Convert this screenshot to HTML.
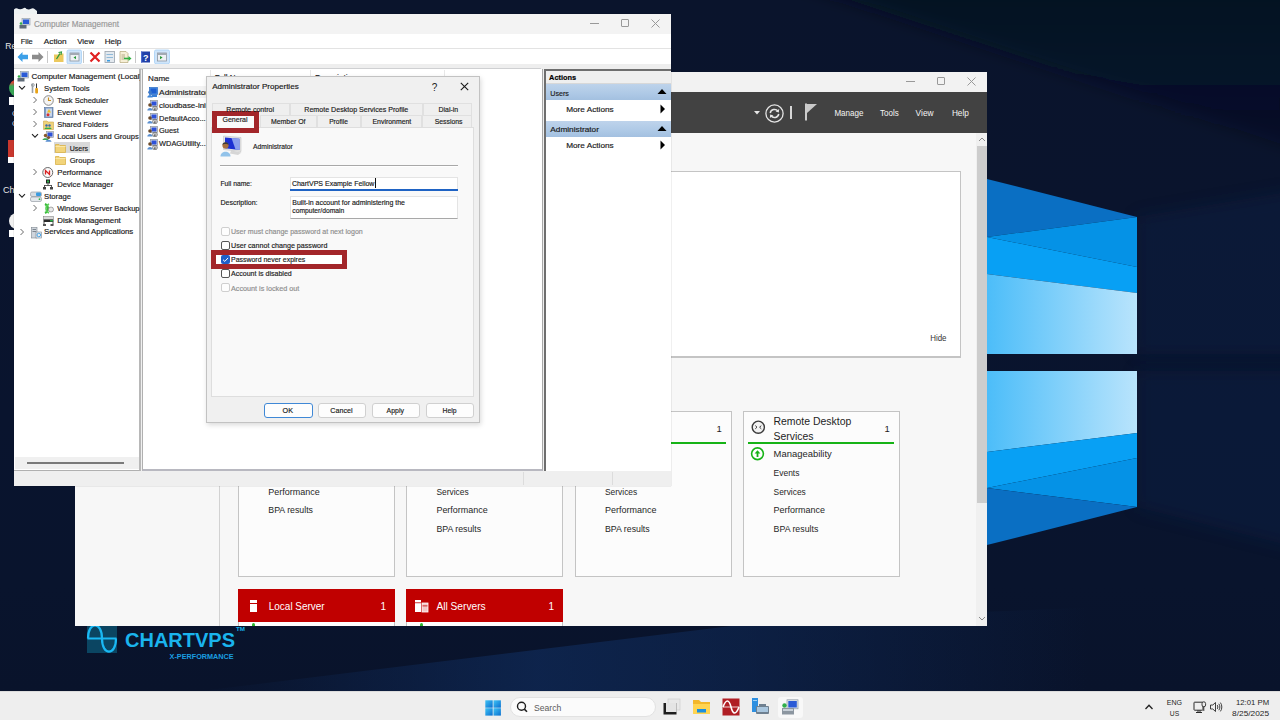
<!DOCTYPE html>
<html><head><meta charset="utf-8">
<style>
*{box-sizing:border-box;margin:0;padding:0}
html,body{width:1280px;height:720px;overflow:hidden}
body{position:relative;font-family:"Liberation Sans",sans-serif;background:#0a1530}
.a{position:absolute}
</style></head><body>
<!-- desktop -->
<div class="a" style="left:0px;top:0px;width:1280px;height:691px;background:linear-gradient(180deg,#0a142c 0%,#0a142d 30%,#09142e 60%,#09142d 85%,#09132b 100%);"></div>
<svg class="a" style="left:0px;top:600px;" width="1280" height="91" viewBox="0 0 1280 91"><defs><linearGradient id="bandg" x1="0" x2="1280" y1="0" y2="0" gradientUnits="userSpaceOnUse"><stop offset="0.15" stop-color="#0f2956" stop-opacity="0"/><stop offset="0.42" stop-color="#0f2956" stop-opacity="0.75"/><stop offset="0.58" stop-color="#0f2956" stop-opacity="0.55"/><stop offset="0.85" stop-color="#0f2956" stop-opacity="0"/></linearGradient></defs>
    <polygon points="200,91 780,20 1280,0 1280,91" fill="url(#bandg)"/></svg>
<svg class="a" style="left:0px;top:0px;" width="1280" height="691" viewBox="0 0 1280 691">
  <defs><linearGradient id="lg1" x1="987" x2="1137" y1="0" y2="0" gradientUnits="userSpaceOnUse"><stop offset="0" stop-color="#4cbdf9"/><stop offset="1" stop-color="#b9e4fc"/></linearGradient></defs>
  <defs><linearGradient id="wedg" x1="0" y1="0" x2="0" y2="1"><stop offset="0" stop-color="#070e20" stop-opacity="0.7"/><stop offset="1" stop-color="#070e20" stop-opacity="0.3"/></linearGradient></defs>
  <filter id="bl6" x="-20%" y="-20%" width="140%" height="140%"><feGaussianBlur stdDeviation="8"/></filter><polygon points="790,-20 1300,-20 1300,150" fill="url(#wedg)" filter="url(#bl6)"/>
  <polygon points="1137,217 1300,190 1300,354 1137,354" fill="#0e2149" opacity="0.38" filter="url(#bl6)"/>
  <polygon points="1137,371 1300,371 1300,548 1137,507" fill="#0e2149" opacity="0.38" filter="url(#bl6)"/>
  <polygon points="987,179 1137,217 987,237" fill="#0a6fc3"/>
  <polygon points="987,237 1137,217 1137,267" fill="#0592e6"/>
  <polygon points="987,237 1137,267 1137,293 987,274" fill="#08a0f4"/>
  <polygon points="987,274 1137,293 1137,354 987,354" fill="url(#lg1)"/>
  <polygon points="987,371 1137,371 1137,433 987,452" fill="url(#lg1)"/>
  <polygon points="987,452 1137,433 1137,458 987,488" fill="#08a0f4"/>
  <polygon points="987,488 1137,458 1137,507" fill="#0592e6"/>
  <polygon points="987,488 1137,507 987,545" fill="#0a6fc3"/></svg>
<div class="a" style="left:9px;top:79px;width:14px;height:18px;background:linear-gradient(180deg,#d84a3a 0%,#d84a3a 20%,#3aa757 40%,#3aa757 100%);border-radius:9px 0 0 9px"></div>
<div class="a" style="left:9px;top:97px;width:6px;height:8px;background:#fff;"></div>
<div class="a" style="left:8px;top:140px;width:8px;height:17px;background:#c8372d;"></div>
<div class="a" style="left:8px;top:157px;width:6px;height:6px;background:#fff;"></div>
<div class="a" style="left:9px;top:213px;width:12px;height:16px;background:#f0f0f0;border-radius:8px 0 0 8px"></div>
<div class="a" style="left:9px;top:230px;width:6px;height:7px;background:#fff;"></div>
<div class="a" style="left:87px;top:626px;width:30px;height:27px;background:#0b4562;"></div>
<svg class="a" style="left:84px;top:622px;" width="40" height="36" viewBox="0 0 40 36"><path d="M4 16.5 C4 -1, 18 -1, 18 16.5 C18 34, 32 34, 32 16.5 M3.5 16.5 L32.5 16.5" stroke="#1ab8f4" stroke-width="2.2" fill="none"/></svg>
<svg class="a" style="left:0;top:0" width="1280" height="720" font-family="Liberation Sans, sans-serif"><text x="5.3" y="48.8" font-size="8.6" fill="#e6e6e6">Re</text><text x="12" y="116" font-size="8" fill="#cfd6e0">C</text><text x="12" y="126" font-size="8" fill="#cfd6e0">C</text><text x="3" y="192.7" font-size="9" fill="#e6e6e6">Cha</text><text x="125" y="646.6" font-size="20" fill="#1ab4ee" textLength="110" lengthAdjust="spacingAndGlyphs" font-weight="bold">CHARTVPS</text><text x="236" y="631" font-size="6" fill="#1ab4ee" textLength="9" lengthAdjust="spacingAndGlyphs" font-weight="bold">TM</text><text x="169.6" y="658.8" font-size="7.3" fill="#1a9ee0" textLength="64" lengthAdjust="spacingAndGlyphs" font-weight="bold">X-PERFORMANCE</text></svg>
<!-- sm -->
<div class="a" style="left:75px;top:72px;width:912px;height:554px;background:#f7f7f7;"></div>
<div class="a" style="left:75px;top:72px;width:912px;height:20px;background:#f2f2f2;"></div>
<div class="a" style="left:906px;top:81px;width:9px;height:1px;background:#999;"></div>
<div class="a" style="left:937px;top:77px;width:8px;height:8px;background:transparent;border:1px solid #999;border-radius:1px"></div>
<svg class="a" style="left:967px;top:77px;" width="9" height="9" viewBox="0 0 9 9"><path d="M0.5 0.5 L8.5 8.5 M8.5 0.5 L0.5 8.5" stroke="#999" stroke-width="1"/></svg>
<div class="a" style="left:75px;top:92px;width:912px;height:41px;background:#424242;"></div>
<svg class="a" style="left:753px;top:110px;" width="8" height="6" viewBox="0 0 8 6"><path d="M1 1 L7 1 L4 4.5 Z" fill="#e6e6e6"/></svg>
<svg class="a" style="left:764px;top:103px;" width="21" height="21" viewBox="0 0 21 21"><circle cx="10.5" cy="10.5" r="8.6" stroke="#e6e6e6" stroke-width="1.3" fill="none"/>
    <path d="M6.2 10 A4.4 4.4 0 0 1 14 8.2" stroke="#e6e6e6" stroke-width="1.5" fill="none"/>
    <path d="M15.2 6 L14.8 9.6 L11.6 8.6 Z" fill="#e6e6e6"/>
    <path d="M14.8 11 A4.4 4.4 0 0 1 7 12.8" stroke="#e6e6e6" stroke-width="1.5" fill="none"/>
    <path d="M5.8 15 L6.2 11.4 L9.4 12.4 Z" fill="#e6e6e6"/></svg>
<div class="a" style="left:790px;top:106px;width:2px;height:13px;background:#d6d6d6;"></div>
<svg class="a" style="left:804px;top:103px;" width="14" height="18" viewBox="0 0 14 18"><path d="M2 0.5 L2 17.5" stroke="#dcdcdc" stroke-width="1.8"/><path d="M3 1 L13 1 L3 10 Z" fill="#c9c9c9"/></svg>
<div class="a" style="left:219px;top:133px;width:1px;height:493px;background:#d2d2d2;"></div>
<div class="a" style="left:976px;top:133px;width:11px;height:493px;background:#f0f0f0;"></div>
<div class="a" style="left:977px;top:146px;width:10px;height:357px;background:#cdcdcd;"></div>
<svg class="a" style="left:977px;top:136px;" width="10" height="7" viewBox="0 0 10 7"><path d="M2 5 L5 2 L8 5" stroke="#8a8a8a" stroke-width="1" fill="none"/></svg>
<svg class="a" style="left:977px;top:615px;" width="10" height="7" viewBox="0 0 10 7"><path d="M2 2 L5 5 L8 2" stroke="#8a8a8a" stroke-width="1" fill="none"/></svg>
<div class="a" style="left:238px;top:171px;width:723px;height:187px;background:#fff;border:1px solid #c4c4c4;border-bottom:2px solid #c4c4c4"></div>
<div class="a" style="left:238px;top:411px;width:157px;height:166px;background:#fcfcfc;border:1px solid #c4c4c4"></div>
<div class="a" style="left:406px;top:411px;width:157px;height:166px;background:#fcfcfc;border:1px solid #c4c4c4"></div>
<div class="a" style="left:575px;top:411px;width:157px;height:166px;background:#fcfcfc;border:1px solid #c4c4c4"></div>
<div class="a" style="left:743px;top:411px;width:157px;height:166px;background:#fcfcfc;border:1px solid #c4c4c4"></div>
<div class="a" style="left:580px;top:442px;width:146px;height:2px;background:#16b316;"></div>
<div class="a" style="left:748px;top:442px;width:146px;height:2px;background:#16b316;"></div>
<svg class="a" style="left:750px;top:419px;" width="17" height="17" viewBox="0 0 17 17"><circle cx="8.3" cy="8.2" r="6.1" stroke="#3a3a3a" stroke-width="1.4" fill="#f2f2f2"/>
      <path d="M5.3 6.6 L7 8.2 L5.3 9.8 M11.3 6.6 L9.6 8.2 L11.3 9.8" stroke="#3a3a3a" stroke-width="1" fill="none"/></svg>
<svg class="a" style="left:750px;top:446px;" width="16" height="16" viewBox="0 0 16 16"><circle cx="7.5" cy="7.75" r="5.9" stroke="#16b316" stroke-width="1.6" fill="#fff"/>
      <path d="M7.5 11 L7.5 6.2" stroke="#16b316" stroke-width="1.8"/><path d="M4.6 7.6 L7.5 4.2 L10.4 7.6 Z" fill="#16b316"/></svg>
<div class="a" style="left:238px;top:589px;width:157px;height:37px;background:#fff;border:1px solid #c4c4c4;border-bottom:none"></div>
<div class="a" style="left:238px;top:589px;width:157px;height:33px;background:#c00000;"></div>
<div class="a" style="left:406px;top:589px;width:157px;height:37px;background:#fff;border:1px solid #c4c4c4;border-bottom:none"></div>
<div class="a" style="left:406px;top:589px;width:157px;height:33px;background:#c00000;"></div>
<div class="a" style="left:252px;top:623px;width:3px;height:3px;background:#2fb52f;border-radius:2px 2px 0 0"></div>
<div class="a" style="left:420px;top:623px;width:3px;height:3px;background:#2fb52f;border-radius:2px 2px 0 0"></div>
<div class="a" style="left:250px;top:600px;width:6.5px;height:12px;background:#fff;"></div>
<div class="a" style="left:250px;top:602.5px;width:6.5px;height:0.8px;background:#c00000;"></div>
<svg class="a" style="left:414px;top:599px;" width="16" height="14" viewBox="0 0 16 14"><rect x="1" y="1" width="6" height="12" fill="#fff"/><rect x="1" y="3.4" width="6" height="0.8" fill="#c00000"/><rect x="8" y="4" width="6" height="9" fill="#f3c9c9"/><rect x="8" y="4" width="6" height="9" fill="none" stroke="#fff" stroke-width="0.8"/><rect x="8.5" y="6.5" width="5" height="0.8" fill="#c00000"/></svg>
<svg class="a" style="left:0;top:0" width="1280" height="720" font-family="Liberation Sans, sans-serif"><text x="834.4" y="116.25" font-size="9" fill="#f4f4f4" textLength="29" lengthAdjust="spacingAndGlyphs">Manage</text><text x="880" y="116.25" font-size="9" fill="#f4f4f4" textLength="18.75" lengthAdjust="spacingAndGlyphs">Tools</text><text x="915.6" y="116.25" font-size="9" fill="#f4f4f4" textLength="18" lengthAdjust="spacingAndGlyphs">View</text><text x="951.9" y="116.25" font-size="9" fill="#f4f4f4" textLength="17" lengthAdjust="spacingAndGlyphs">Help</text><text x="930.2" y="341.2" font-size="8.3" fill="#333" textLength="16.3" lengthAdjust="spacingAndGlyphs">Hide</text><text x="773.5" y="424.7" font-size="10" fill="#1e1e1e" textLength="77.8" lengthAdjust="spacingAndGlyphs">Remote Desktop</text><text x="773.5" y="439.5" font-size="10" fill="#1e1e1e" textLength="40" lengthAdjust="spacingAndGlyphs">Services</text><text x="884.5" y="432" font-size="9.5" fill="#1e1e1e">1</text><text x="716.5" y="432" font-size="9.5" fill="#1e1e1e">1</text><text x="773.6" y="457.3" font-size="8.8" fill="#262626" textLength="58.2" lengthAdjust="spacingAndGlyphs">Manageability</text><text x="773.6" y="476.1" font-size="8.8" fill="#262626" textLength="25.8" lengthAdjust="spacingAndGlyphs">Events</text><text x="773.6" y="494.7" font-size="8.8" fill="#262626" textLength="32.2" lengthAdjust="spacingAndGlyphs">Services</text><text x="773.6" y="513.3" font-size="8.8" fill="#262626" textLength="51.4" lengthAdjust="spacingAndGlyphs">Performance</text><text x="773.6" y="532" font-size="8.8" fill="#262626" textLength="44.7" lengthAdjust="spacingAndGlyphs">BPA results</text><text x="605" y="494.7" font-size="8.8" fill="#262626" textLength="32.2" lengthAdjust="spacingAndGlyphs">Services</text><text x="605" y="513.3" font-size="8.8" fill="#262626" textLength="51.4" lengthAdjust="spacingAndGlyphs">Performance</text><text x="605" y="532" font-size="8.8" fill="#262626" textLength="44.7" lengthAdjust="spacingAndGlyphs">BPA results</text><text x="436.4" y="494.7" font-size="8.8" fill="#262626" textLength="32.2" lengthAdjust="spacingAndGlyphs">Services</text><text x="436.4" y="513.3" font-size="8.8" fill="#262626" textLength="51.4" lengthAdjust="spacingAndGlyphs">Performance</text><text x="436.4" y="532" font-size="8.8" fill="#262626" textLength="44.7" lengthAdjust="spacingAndGlyphs">BPA results</text><text x="268.3" y="494.7" font-size="8.8" fill="#262626" textLength="51.4" lengthAdjust="spacingAndGlyphs">Performance</text><text x="268.3" y="513.3" font-size="8.8" fill="#262626" textLength="44.7" lengthAdjust="spacingAndGlyphs">BPA results</text><text x="268.8" y="609.8" font-size="10.6" fill="#fff" textLength="55.9" lengthAdjust="spacingAndGlyphs">Local Server</text><text x="436.4" y="609.8" font-size="10.6" fill="#fff" textLength="49.3" lengthAdjust="spacingAndGlyphs">All Servers</text><text x="380.5" y="609.8" font-size="10" fill="#fff">1</text><text x="548.5" y="609.8" font-size="10" fill="#fff">1</text></svg>
<!-- cm -->
<div class="a" style="left:14px;top:14px;width:657px;height:472px;background:#f0f0f0;box-shadow:0 0 1px rgba(0,0,0,0.35)"></div>
<div class="a" style="left:14px;top:14px;width:657px;height:20px;background:#f3f3f3;"></div>
<svg class="a" style="left:13px;top:6px;" width="26" height="8" viewBox="0 0 26 8"><path d="M1 8 L1 3.5 Q3 1.5 5.5 3 Q8 3.5 10 2.5 Q12 1 13.5 3 Q16 4 18 2.8 Q20 1.5 21.5 3 L24 5 L24 8 Z" fill="#eef2f3"/></svg>
<svg class="a" style="left:19px;top:18px;" width="12" height="11" viewBox="0 0 12 11"><rect x="3" y="0.5" width="8" height="6.5" fill="#cfd8e2" stroke="#8d98a4" stroke-width="0.6"/><rect x="4" y="1.5" width="6" height="4.5" fill="#2a5ad6"/><rect x="0.5" y="7" width="7" height="3.5" fill="#5f6b78"/><circle cx="2" cy="5.5" r="1.3" fill="#2fae4a"/></svg>
<div class="a" style="left:590px;top:23px;width:9px;height:1px;background:#999;"></div>
<div class="a" style="left:621px;top:19px;width:8px;height:8px;background:transparent;border:1px solid #999;border-radius:1px"></div>
<svg class="a" style="left:651px;top:19px;" width="9" height="9" viewBox="0 0 9 9"><path d="M0.5 0.5 L8.5 8.5 M8.5 0.5 L0.5 8.5" stroke="#999" stroke-width="1"/></svg>
<div class="a" style="left:14px;top:34px;width:657px;height:15px;background:#ffffff;"></div>
<div class="a" style="left:14px;top:48px;width:657px;height:1px;background:#e3e3e3;"></div>
<div class="a" style="left:14px;top:49px;width:657px;height:15px;background:#ffffff;"></div>
<svg class="a" style="left:14px;top:49px;" width="160" height="16" viewBox="0 0 160 16">
    <path d="M3.5 8 L8.5 3 L8.5 5.8 L14 5.8 L14 10.2 L8.5 10.2 L8.5 13 Z" fill="#3ca0e8"/>
    <path d="M29.5 8 L24.5 3 L24.5 5.8 L18 5.8 L18 10.2 L24.5 10.2 L24.5 13 Z" fill="#8c8c8c"/>
    <rect x="33" y="2" width="1" height="12" fill="#c8c8c8"/>
    <path d="M40 5.5 L44 5.5 L45 4.5 L49.5 4.5 L49.5 13 L40 13 Z" fill="#ecc95e"/><path d="M42.5 10 L46 4.5" stroke="#2a9a3a" stroke-width="1.3" fill="none"/><path d="M44.5 3.5 L47.5 3 L47 6" stroke="#2a9a3a" stroke-width="1.1" fill="none"/>
    <rect x="53" y="1" width="14.5" height="13.8" rx="1.5" fill="#cfe5fa" stroke="#a6cff5" stroke-width="0.8"/>
    <rect x="56" y="4" width="9" height="8" fill="#eef1f4" stroke="#8d96a0" stroke-width="0.8"/><rect x="56" y="4" width="9" height="2" fill="#a3aab3"/><path d="M62 7 L59.5 8.6 L62 10.2 Z" fill="#2a9a3a"/>
    <rect x="69" y="2" width="1" height="12" fill="#c8c8c8"/>
    <path d="M76.5 3.5 L85.5 12.5 M85.5 3.5 L76.5 12.5" stroke="#e02020" stroke-width="2.2"/>
    <rect x="91" y="2.5" width="9.5" height="11" fill="#e3e9ef" stroke="#98a2ac" stroke-width="0.8"/><rect x="92.5" y="5" width="6.5" height="1" fill="#8fb9d9"/><rect x="92.5" y="8" width="6.5" height="1" fill="#8fb9d9"/><rect x="93" y="11" width="3" height="1.5" fill="#3a9be0"/>
    <path d="M106 2.5 L112 2.5 L114 4.5 L114 13.5 L106 13.5 Z" fill="#f6efd6" stroke="#b5a87a" stroke-width="0.7"/><path d="M107.5 6 L111 6 M107.5 8 L111 8 M107.5 10 L110 10" stroke="#8a7d55" stroke-width="0.6"/><path d="M110 9.5 L116 9.5" stroke="#30b040" stroke-width="1.6"/><path d="M114.5 7 L117.5 9.5 L114.5 12 Z" fill="#30b040"/>
    <rect x="121" y="2" width="1" height="12" fill="#c8c8c8"/>
    <rect x="127" y="2.5" width="9" height="11" fill="#1f3fa8"/><rect x="127" y="2.5" width="1.2" height="11" fill="#4b6ad0"/><text x="131.7" y="11.6" font-size="9" font-family="Liberation Sans" font-weight="bold" fill="#fff" text-anchor="middle">?</text>
    <rect x="140.5" y="1" width="15" height="13.8" rx="1.5" fill="#cfe5fa" stroke="#a6cff5" stroke-width="0.8"/>
    <rect x="143.5" y="4" width="9" height="8" fill="#eef1f4" stroke="#8d96a0" stroke-width="0.8"/><rect x="143.5" y="4" width="9" height="2" fill="#a3aab3"/><path d="M146 7 L148.6 8.6 L146 10.2 Z" fill="#2a9a3a"/>
    </svg>
<div class="a" style="left:14px;top:64px;width:657px;height:6px;background:#eeeeee;"></div>
<div class="a" style="left:14px;top:68px;width:527px;height:2px;background:#cfd0d2;"></div>
<div class="a" style="left:14px;top:69px;width:127px;height:402px;background:#ffffff;border-right:2px solid #b8b8b8;border-bottom:1px solid #b0b0b0"></div>
<div class="a" style="left:15px;top:457px;width:124px;height:12px;background:#f0f0f0;"></div>
<div class="a" style="left:27px;top:462px;width:97px;height:2px;background:#7a7a7a;"></div>
<div class="a" style="left:142px;top:69px;width:401px;height:402px;background:#ffffff;border-left:1px solid #b0b0b0;border-right:1px solid #a8a8a8;border-bottom:2px solid #b8b8c0"></div>
<div class="a" style="left:543px;top:69px;width:1px;height:402px;background:#eeeeee;"></div>
<div class="a" style="left:158px;top:86px;width:48px;height:12px;background:#f3f3f3;"></div>
<div class="a" style="left:210px;top:70px;width:1px;height:14px;background:#e8e8e8;"></div>
<div class="a" style="left:310px;top:70px;width:1px;height:14px;background:#e8e8e8;"></div>
<div class="a" style="left:444px;top:70px;width:1px;height:14px;background:#e8e8e8;"></div>
<div class="a" style="left:544px;top:69px;width:127px;height:402px;background:#ffffff;border-left:2px solid #6e6e6e;border-top:2px solid #6e6e6e"></div>
<div class="a" style="left:546px;top:71px;width:125px;height:13px;background:#efefef;"></div>
<div class="a" style="left:546px;top:83px;width:125px;height:1px;background:#d8d8d8;"></div>
<div class="a" style="left:546px;top:84px;width:125px;height:16px;background:linear-gradient(180deg,#bed3eb 0%,#aec9e6 60%,#a3c0e0 100%);"></div>
<svg class="a" style="left:657px;top:88px;" width="10" height="7" viewBox="0 0 10 7"><path d="M0.5 6 L5 1 L9.5 6 Z" fill="#000"/></svg>
<div class="a" style="left:546px;top:121px;width:125px;height:16px;background:linear-gradient(180deg,#bed3eb 0%,#aec9e6 60%,#a3c0e0 100%);"></div>
<svg class="a" style="left:657px;top:125px;" width="10" height="7" viewBox="0 0 10 7"><path d="M0.5 6 L5 1 L9.5 6 Z" fill="#000"/></svg>
<svg class="a" style="left:660px;top:104px;" width="6" height="10" viewBox="0 0 6 10"><path d="M0.5 0.5 L5 5 L0.5 9.5 Z" fill="#000"/></svg>
<svg class="a" style="left:660px;top:140px;" width="6" height="10" viewBox="0 0 6 10"><path d="M0.5 0.5 L5 5 L0.5 9.5 Z" fill="#000"/></svg>
<div class="a" style="left:14px;top:471px;width:657px;height:15px;background:#efefef;"></div>
<div class="a" style="left:523px;top:472px;width:1px;height:13px;background:#dcdcdc;"></div>
<div class="a" style="left:612px;top:472px;width:1px;height:13px;background:#dcdcdc;"></div>
<div class="a" style="left:54px;top:142px;width:36px;height:11px;background:#d9d9d9;"></div>
<svg class="a" style="left:18px;top:85px;" width="8" height="6" viewBox="0 0 8 6"><path d="M1 1.2 L4 4.2 L7 1.2" stroke="#222" stroke-width="1.1" fill="none"/></svg>
<svg class="a" style="left:31px;top:133px;" width="8" height="6" viewBox="0 0 8 6"><path d="M1 1.2 L4 4.2 L7 1.2" stroke="#222" stroke-width="1.1" fill="none"/></svg>
<svg class="a" style="left:18px;top:193px;" width="8" height="6" viewBox="0 0 8 6"><path d="M1 1.2 L4 4.2 L7 1.2" stroke="#222" stroke-width="1.1" fill="none"/></svg>
<svg class="a" style="left:32px;top:96px;" width="6" height="8" viewBox="0 0 6 8"><path d="M1.5 1 L4.5 4 L1.5 7" stroke="#6a6a6a" stroke-width="1" fill="none"/></svg>
<svg class="a" style="left:32px;top:108px;" width="6" height="8" viewBox="0 0 6 8"><path d="M1.5 1 L4.5 4 L1.5 7" stroke="#6a6a6a" stroke-width="1" fill="none"/></svg>
<svg class="a" style="left:32px;top:120px;" width="6" height="8" viewBox="0 0 6 8"><path d="M1.5 1 L4.5 4 L1.5 7" stroke="#6a6a6a" stroke-width="1" fill="none"/></svg>
<svg class="a" style="left:32px;top:168px;" width="6" height="8" viewBox="0 0 6 8"><path d="M1.5 1 L4.5 4 L1.5 7" stroke="#6a6a6a" stroke-width="1" fill="none"/></svg>
<svg class="a" style="left:32px;top:204px;" width="6" height="8" viewBox="0 0 6 8"><path d="M1.5 1 L4.5 4 L1.5 7" stroke="#6a6a6a" stroke-width="1" fill="none"/></svg>
<svg class="a" style="left:19px;top:228px;" width="6" height="8" viewBox="0 0 6 8"><path d="M1.5 1 L4.5 4 L1.5 7" stroke="#6a6a6a" stroke-width="1" fill="none"/></svg>
<svg class="a" style="left:17px;top:71px;" width="12" height="11" viewBox="0 0 12 11"><rect x="3.5" y="0.5" width="8" height="6.5" fill="#cfd8e2" stroke="#8d98a4" stroke-width="0.6"/><rect x="4.5" y="1.5" width="6" height="4.5" fill="#2a5ad6"/><rect x="0.5" y="7" width="7" height="3.5" fill="#5f6b78"/><circle cx="2" cy="5.5" r="1.3" fill="#2fae4a"/></svg>
<svg class="a" style="left:31px;top:83px;" width="8" height="11" viewBox="0 0 8 11"><path d="M1.5 1 L1.5 10" stroke="#9aa0a6" stroke-width="1.6"/><circle cx="1.8" cy="2" r="1.5" fill="none" stroke="#9aa0a6" stroke-width="0.9"/><path d="M5.5 0.5 L5.5 5" stroke="#333" stroke-width="1"/><rect x="4.2" y="5" width="2.8" height="5.5" rx="1" fill="#e8a318"/></svg>
<svg class="a" style="left:43px;top:95px;" width="11" height="11" viewBox="0 0 11 11"><circle cx="5.5" cy="5.5" r="4.8" fill="#f4f4f4" stroke="#8a8a8a" stroke-width="1"/><path d="M5.5 2.5 L5.5 5.5 L8 5.5" stroke="#c89020" stroke-width="1.1" fill="none"/></svg>
<svg class="a" style="left:44px;top:107px;" width="10" height="11" viewBox="0 0 10 11"><rect x="0.5" y="0.5" width="8.5" height="10" fill="#7c9bc6" stroke="#52709c" stroke-width="0.6"/><rect x="2" y="1.5" width="6" height="8" fill="#c9d6ea"/><path d="M5 2 L7 5.5 L3 5.5 Z" fill="#f0c020"/><circle cx="4" cy="7.8" r="1.5" fill="#d83030"/></svg>
<svg class="a" style="left:43px;top:119px;" width="11" height="11" viewBox="0 0 11 11"><path d="M0.5 2 L4 2 L5 3 L10.5 3 L10.5 10.5 L0.5 10.5 Z" fill="#efd27a" stroke="#cfa84a" stroke-width="0.6"/><circle cx="3.5" cy="6.5" r="1.2" fill="#3a6ab0"/><circle cx="6.5" cy="6.5" r="1.2" fill="#3a6ab0"/><path d="M1.5 10 C1.5 8, 5.5 8, 5.5 10 M4.5 10 C4.5 8, 8.5 8, 8.5 10" fill="#2fae4a"/></svg>
<svg class="a" style="left:42px;top:131px;" width="12" height="11" viewBox="0 0 12 11"><rect x="4.5" y="0.5" width="7" height="6" fill="#d9dde3" stroke="#8a9099" stroke-width="0.6"/><rect x="5.5" y="1.5" width="5" height="4" fill="#2f52d8"/><circle cx="3.5" cy="4.5" r="1.7" fill="#8a5a2a"/><path d="M0.5 9 C0.5 6.5, 6.5 6.5, 6.5 9 Z" fill="#3aa757"/><circle cx="6.5" cy="6.5" r="1.6" fill="#7a5030"/><path d="M3.5 10.8 C3.5 8, 9.5 8, 9.5 10.8 Z" fill="#5a8fd0"/></svg>
<svg class="a" style="left:55px;top:143px;" width="11" height="10" viewBox="0 0 11 10"><path d="M0.5 1.5 L4 1.5 L5 2.5 L10.5 2.5 L10.5 9.5 L0.5 9.5 Z" fill="#f2d47a" stroke="#d9b24a" stroke-width="0.8"/><path d="M0.5 3.5 L10.5 3.5" stroke="#fbe7a8" stroke-width="1"/></svg>
<svg class="a" style="left:55px;top:155px;" width="11" height="10" viewBox="0 0 11 10"><path d="M0.5 1.5 L4 1.5 L5 2.5 L10.5 2.5 L10.5 9.5 L0.5 9.5 Z" fill="#f2d47a" stroke="#d9b24a" stroke-width="0.8"/><path d="M0.5 3.5 L10.5 3.5" stroke="#fbe7a8" stroke-width="1"/></svg>
<svg class="a" style="left:42px;top:167px;" width="12" height="11" viewBox="0 0 12 11"><circle cx="5.75" cy="5.5" r="5" fill="#fafafa" stroke="#5a5a5a" stroke-width="0.9"/><path d="M3.5 7.5 L3.5 3.5 L7.5 7.5 L7.5 3.5" stroke="#d82020" stroke-width="1.3" fill="none"/></svg>
<svg class="a" style="left:43px;top:179px;" width="10" height="11" viewBox="0 0 10 11"><rect x="3" y="0.5" width="4" height="4" fill="#222"/><rect x="4" y="1.5" width="2" height="2" fill="#2fae4a"/><path d="M5 4.5 L5 6.5 M1 6.5 L9 6.5 M1.5 6.5 L1.5 8 M8.5 6.5 L8.5 8" stroke="#333" stroke-width="0.8"/><rect x="0" y="8" width="3" height="2.5" fill="#444"/><rect x="7" y="8" width="3" height="2.5" fill="#444"/></svg>
<svg class="a" style="left:30px;top:191px;" width="12" height="11" viewBox="0 0 12 11"><rect x="0.5" y="1" width="11" height="4.5" rx="1.5" fill="#d8dde2" stroke="#8a9099" stroke-width="0.6"/><rect x="6" y="1.5" width="5" height="3.5" rx="1" fill="#3a9be0"/><rect x="0.5" y="6" width="11" height="4.5" rx="1.5" fill="#e4e8ec" stroke="#8a9099" stroke-width="0.6"/><circle cx="9.5" cy="8.2" r="0.9" fill="#2fae4a"/></svg>
<svg class="a" style="left:43px;top:203px;" width="11" height="11" viewBox="0 0 11 11"><path d="M2 1 C6 3, 6 8, 2 10" stroke="#3ab83a" stroke-width="2" fill="none"/><path d="M6 1 C2 3, 2 8, 6 10" stroke="#58d058" stroke-width="1.6" fill="none"/><circle cx="8" cy="6.5" r="2.5" fill="#e8e8e8" stroke="#777" stroke-width="0.6"/></svg>
<svg class="a" style="left:43px;top:215px;" width="11" height="11" viewBox="0 0 11 11"><rect x="0.5" y="1.5" width="10" height="3" fill="#d9d9d9" stroke="#777" stroke-width="0.5"/><rect x="0.5" y="4.5" width="10" height="2.5" fill="#2a2a2a"/><rect x="7" y="5" width="3" height="1.5" fill="#2fae4a"/><path d="M1 7 L1 9.5 M10 7 L10 9.5" stroke="#555" stroke-width="1"/><rect x="0" y="9" width="3" height="2" fill="#555"/><rect x="7.5" y="9" width="3" height="2" fill="#555"/></svg>
<svg class="a" style="left:31px;top:227px;" width="11" height="12" viewBox="0 0 11 12"><rect x="0.5" y="0.5" width="5.5" height="10.5" fill="#cfd5dc" stroke="#7d8690" stroke-width="0.6"/><rect x="1.5" y="2" width="3.5" height="1" fill="#7d8690"/><rect x="1.5" y="4" width="3.5" height="1" fill="#7d8690"/><rect x="5" y="5" width="5.5" height="6" fill="#e8edf2" stroke="#7d8690" stroke-width="0.6"/><circle cx="7.8" cy="8" r="1.8" fill="none" stroke="#3a9be0" stroke-width="0.9"/></svg>
<svg class="a" style="left:147px;top:87px;" width="11" height="11" viewBox="0 0 11 11"><rect x="2.5" y="0.5" width="8" height="7" fill="#4a90e2" stroke="#2a6ac0" stroke-width="0.7"/><rect x="3.5" y="1.5" width="6" height="5" fill="#1f5fd0"/><circle cx="3" cy="5.2" r="1.8" fill="#3b78c8"/><path d="M0.3 10.5 C0.3 7, 5.7 7, 5.7 10.5 Z" fill="#3f86d8"/><rect x="5" y="8" width="5" height="2" fill="#3a7fd5"/></svg>
<svg class="a" style="left:147px;top:100px;" width="11" height="11" viewBox="0 0 11 11"><rect x="3.5" y="0.5" width="7" height="6" fill="#d9dde3" stroke="#8a9099" stroke-width="0.7"/><rect x="4.5" y="1.5" width="5" height="4" fill="#2f52d8"/><circle cx="3" cy="5" r="1.8" fill="#6b4a2a"/><path d="M0.3 10.5 C0.3 7, 5.7 7, 5.7 10.5 Z" fill="#5a8fd0"/><circle cx="8" cy="8.5" r="2.3" fill="#fff" stroke="#444" stroke-width="0.7"/><path d="M8 7.2 L8 9.6 M6.9 8.6 L8 9.7 L9.1 8.6" stroke="#222" stroke-width="0.7" fill="none"/></svg>
<svg class="a" style="left:147px;top:113px;" width="11" height="11" viewBox="0 0 11 11"><rect x="3.5" y="0.5" width="7" height="6" fill="#d9dde3" stroke="#8a9099" stroke-width="0.7"/><rect x="4.5" y="1.5" width="5" height="4" fill="#2f52d8"/><circle cx="3" cy="5" r="1.8" fill="#6b4a2a"/><path d="M0.3 10.5 C0.3 7, 5.7 7, 5.7 10.5 Z" fill="#5a8fd0"/><circle cx="8" cy="8.5" r="2.3" fill="#fff" stroke="#444" stroke-width="0.7"/><path d="M8 7.2 L8 9.6 M6.9 8.6 L8 9.7 L9.1 8.6" stroke="#222" stroke-width="0.7" fill="none"/></svg>
<svg class="a" style="left:147px;top:126px;" width="11" height="11" viewBox="0 0 11 11"><rect x="3.5" y="0.5" width="7" height="6" fill="#d9dde3" stroke="#8a9099" stroke-width="0.7"/><rect x="4.5" y="1.5" width="5" height="4" fill="#2f52d8"/><circle cx="3" cy="5" r="1.8" fill="#6b4a2a"/><path d="M0.3 10.5 C0.3 7, 5.7 7, 5.7 10.5 Z" fill="#5a8fd0"/><circle cx="8" cy="8.5" r="2.3" fill="#fff" stroke="#444" stroke-width="0.7"/><path d="M8 7.2 L8 9.6 M6.9 8.6 L8 9.7 L9.1 8.6" stroke="#222" stroke-width="0.7" fill="none"/></svg>
<svg class="a" style="left:147px;top:139px;" width="11" height="11" viewBox="0 0 11 11"><rect x="3.5" y="0.5" width="7" height="6" fill="#d9dde3" stroke="#8a9099" stroke-width="0.7"/><rect x="4.5" y="1.5" width="5" height="4" fill="#2f52d8"/><circle cx="3" cy="5" r="1.8" fill="#6b4a2a"/><path d="M0.3 10.5 C0.3 7, 5.7 7, 5.7 10.5 Z" fill="#5a8fd0"/><circle cx="8" cy="8.5" r="2.3" fill="#fff" stroke="#444" stroke-width="0.7"/><path d="M8 7.2 L8 9.6 M6.9 8.6 L8 9.7 L9.1 8.6" stroke="#222" stroke-width="0.7" fill="none"/></svg>
<svg class="a" style="left:0;top:0" width="1280" height="720" font-family="Liberation Sans, sans-serif"><text x="33.9" y="26.65" font-size="8.2" fill="#9a9a9a" textLength="85" lengthAdjust="spacingAndGlyphs" stroke="#9a9a9a" stroke-width="0.18">Computer Management</text><text x="20.75" y="44" font-size="8.1" fill="#1b1b1b" textLength="12" lengthAdjust="spacingAndGlyphs" stroke="#1b1b1b" stroke-width="0.18">File</text><text x="43.8" y="44" font-size="8.1" fill="#1b1b1b" textLength="22.9" lengthAdjust="spacingAndGlyphs" stroke="#1b1b1b" stroke-width="0.18">Action</text><text x="77.3" y="44" font-size="8.1" fill="#1b1b1b" textLength="16.8" lengthAdjust="spacingAndGlyphs" stroke="#1b1b1b" stroke-width="0.18">View</text><text x="104.7" y="44" font-size="8.1" fill="#1b1b1b" textLength="16.6" lengthAdjust="spacingAndGlyphs" stroke="#1b1b1b" stroke-width="0.18">Help</text><svg x="15" y="69" width="125" height="388" viewBox="15 69 125 388" overflow="hidden"><text x="31.5" y="78.75" font-size="8" fill="#1b1b1b" textLength="110.7" lengthAdjust="spacingAndGlyphs" stroke="#1b1b1b" stroke-width="0.18">Computer Management (Local)</text></svg><svg x="15" y="69" width="125" height="388" viewBox="15 69 125 388" overflow="hidden"><text x="44" y="90.8" font-size="8" fill="#1b1b1b" textLength="45.7" lengthAdjust="spacingAndGlyphs" stroke="#1b1b1b" stroke-width="0.18">System Tools</text></svg><svg x="15" y="69" width="125" height="388" viewBox="15 69 125 388" overflow="hidden"><text x="57.2" y="102.7" font-size="8" fill="#1b1b1b" textLength="51.3" lengthAdjust="spacingAndGlyphs" stroke="#1b1b1b" stroke-width="0.18">Task Scheduler</text></svg><svg x="15" y="69" width="125" height="388" viewBox="15 69 125 388" overflow="hidden"><text x="57.2" y="114.7" font-size="8" fill="#1b1b1b" textLength="44.3" lengthAdjust="spacingAndGlyphs" stroke="#1b1b1b" stroke-width="0.18">Event Viewer</text></svg><svg x="15" y="69" width="125" height="388" viewBox="15 69 125 388" overflow="hidden"><text x="57.2" y="126.7" font-size="8" fill="#1b1b1b" textLength="51" lengthAdjust="spacingAndGlyphs" stroke="#1b1b1b" stroke-width="0.18">Shared Folders</text></svg><svg x="15" y="69" width="125" height="388" viewBox="15 69 125 388" overflow="hidden"><text x="57.2" y="138.7" font-size="8" fill="#1b1b1b" textLength="81.5" lengthAdjust="spacingAndGlyphs" stroke="#1b1b1b" stroke-width="0.18">Local Users and Groups</text></svg><svg x="15" y="69" width="125" height="388" viewBox="15 69 125 388" overflow="hidden"><text x="69.7" y="150.85" font-size="8" fill="#1b1b1b" textLength="18.3" lengthAdjust="spacingAndGlyphs" stroke="#1b1b1b" stroke-width="0.18">Users</text></svg><svg x="15" y="69" width="125" height="388" viewBox="15 69 125 388" overflow="hidden"><text x="69.7" y="162.9" font-size="8" fill="#1b1b1b" textLength="25" lengthAdjust="spacingAndGlyphs" stroke="#1b1b1b" stroke-width="0.18">Groups</text></svg><svg x="15" y="69" width="125" height="388" viewBox="15 69 125 388" overflow="hidden"><text x="57.2" y="174.7" font-size="8" fill="#1b1b1b" textLength="44.8" lengthAdjust="spacingAndGlyphs" stroke="#1b1b1b" stroke-width="0.18">Performance</text></svg><svg x="15" y="69" width="125" height="388" viewBox="15 69 125 388" overflow="hidden"><text x="57.2" y="186.7" font-size="8" fill="#1b1b1b" textLength="56" lengthAdjust="spacingAndGlyphs" stroke="#1b1b1b" stroke-width="0.18">Device Manager</text></svg><svg x="15" y="69" width="125" height="388" viewBox="15 69 125 388" overflow="hidden"><text x="44" y="198.8" font-size="8" fill="#1b1b1b" textLength="27" lengthAdjust="spacingAndGlyphs" stroke="#1b1b1b" stroke-width="0.18">Storage</text></svg><svg x="15" y="69" width="125" height="388" viewBox="15 69 125 388" overflow="hidden"><text x="57.2" y="211" font-size="8" fill="#1b1b1b" textLength="82.4" lengthAdjust="spacingAndGlyphs" stroke="#1b1b1b" stroke-width="0.18">Windows Server Backup</text></svg><svg x="15" y="69" width="125" height="388" viewBox="15 69 125 388" overflow="hidden"><text x="57.2" y="222.7" font-size="8" fill="#1b1b1b" textLength="63.6" lengthAdjust="spacingAndGlyphs" stroke="#1b1b1b" stroke-width="0.18">Disk Management</text></svg><svg x="15" y="69" width="125" height="388" viewBox="15 69 125 388" overflow="hidden"><text x="44" y="234.4" font-size="8" fill="#1b1b1b" textLength="89.3" lengthAdjust="spacingAndGlyphs" stroke="#1b1b1b" stroke-width="0.18">Services and Applications</text></svg><text x="148.1" y="80.6" font-size="8" fill="#1b1b1b" textLength="21.5" lengthAdjust="spacingAndGlyphs" stroke="#1b1b1b" stroke-width="0.18">Name</text><text x="214.8" y="80.9" font-size="8.6" fill="#1b1b1b" textLength="36" lengthAdjust="spacingAndGlyphs" stroke="#1b1b1b" stroke-width="0.18">Full Name</text><text x="315" y="80.9" font-size="8.6" fill="#1b1b1b" textLength="42" lengthAdjust="spacingAndGlyphs" stroke="#1b1b1b" stroke-width="0.18">Description</text><svg x="143" y="70" width="399" height="400" viewBox="143 70 399 400" overflow="hidden"><text x="159.1" y="95.3" font-size="8" fill="#1b1b1b" textLength="49" lengthAdjust="spacingAndGlyphs" stroke="#1b1b1b" stroke-width="0.18">Administrator</text></svg><svg x="143" y="70" width="399" height="400" viewBox="143 70 399 400" overflow="hidden"><text x="159.1" y="108" font-size="8" fill="#1b1b1b" textLength="49" lengthAdjust="spacingAndGlyphs" stroke="#1b1b1b" stroke-width="0.18">cloudbase-init</text></svg><svg x="143" y="70" width="399" height="400" viewBox="143 70 399 400" overflow="hidden"><text x="159.1" y="120.8" font-size="8" fill="#1b1b1b" textLength="46.6" lengthAdjust="spacingAndGlyphs" stroke="#1b1b1b" stroke-width="0.18">DefaultAcco...</text></svg><svg x="143" y="70" width="399" height="400" viewBox="143 70 399 400" overflow="hidden"><text x="159.1" y="133.4" font-size="8" fill="#1b1b1b" textLength="19.8" lengthAdjust="spacingAndGlyphs" stroke="#1b1b1b" stroke-width="0.18">Guest</text></svg><svg x="143" y="70" width="399" height="400" viewBox="143 70 399 400" overflow="hidden"><text x="159.1" y="146" font-size="8" fill="#1b1b1b" textLength="46.6" lengthAdjust="spacingAndGlyphs" stroke="#1b1b1b" stroke-width="0.18">WDAGUtility...</text></svg><text x="549.1" y="80" font-size="8" fill="#000" textLength="27" lengthAdjust="spacingAndGlyphs" font-weight="bold" stroke="#000" stroke-width="0.18">Actions</text><text x="550.3" y="96.3" font-size="8" fill="#1b1b1b" textLength="18.6" lengthAdjust="spacingAndGlyphs" stroke="#1b1b1b" stroke-width="0.18">Users</text><text x="566.2" y="112.1" font-size="8" fill="#1b1b1b" textLength="47.5" lengthAdjust="spacingAndGlyphs" stroke="#1b1b1b" stroke-width="0.18">More Actions</text><text x="550.3" y="131.9" font-size="8" fill="#1b1b1b" textLength="48.6" lengthAdjust="spacingAndGlyphs" stroke="#1b1b1b" stroke-width="0.18">Administrator</text><text x="566.2" y="147.6" font-size="8" fill="#1b1b1b" textLength="47.5" lengthAdjust="spacingAndGlyphs" stroke="#1b1b1b" stroke-width="0.18">More Actions</text></svg>
<!-- dlg -->
<div class="a" style="left:206px;top:76px;width:274px;height:347px;background:#f0f0f0;border:1px solid #c2c2c2;box-shadow:1px 2px 5px rgba(0,0,0,0.15)"></div>
<svg class="a" style="left:430px;top:82px;" width="9" height="10" viewBox="0 0 9 10"><text x="4.5" y="8.5" font-size="10" font-family="Liberation Sans" fill="#222" text-anchor="middle">?</text></svg>
<svg class="a" style="left:460px;top:82px;" width="9" height="9" viewBox="0 0 9 9"><path d="M0.8 0.8 L8.2 8.2 M8.2 0.8 L0.8 8.2" stroke="#1a1a1a" stroke-width="1.1"/></svg>
<div class="a" style="left:212px;top:103px;width:78px;height:12px;background:#efefef;border:1px solid #e0e0e0;border-bottom:none"></div>
<div class="a" style="left:290px;top:103px;width:133px;height:12px;background:#efefef;border:1px solid #e0e0e0;border-bottom:none"></div>
<div class="a" style="left:423px;top:103px;width:49px;height:12px;background:#efefef;border:1px solid #e0e0e0;border-bottom:none"></div>
<div class="a" style="left:260px;top:115px;width:57px;height:12px;background:#efefef;border:1px solid #e0e0e0;border-bottom:none"></div>
<div class="a" style="left:317px;top:115px;width:44px;height:12px;background:#efefef;border:1px solid #e0e0e0;border-bottom:none"></div>
<div class="a" style="left:361px;top:115px;width:61px;height:12px;background:#efefef;border:1px solid #e0e0e0;border-bottom:none"></div>
<div class="a" style="left:422px;top:115px;width:50px;height:12px;background:#efefef;border:1px solid #e0e0e0;border-bottom:none"></div>
<div class="a" style="left:211px;top:127px;width:263px;height:270px;background:#f9f9f9;border:1px solid #dedede"></div>
<div class="a" style="left:212px;top:111px;width:47px;height:22px;background:#fafafa;border:5.5px solid #a3262a"></div>
<svg class="a" style="left:219px;top:135px;" width="24" height="23" viewBox="0 0 24 23">
      <path d="M12 15.5 L22.5 17.5 L19 20 L11 18.5 Z" fill="#d6d6d6"/>
      <path d="M4.5 1 L22 2.5 L22 16.5 L4.5 14.5 Z" fill="#e4e4e4" stroke="#c2c2c2" stroke-width="0.6"/>
      <path d="M6 2.5 L20.5 3.7 L20.5 15 L6 13.2 Z" fill="#1d2fd2"/>
      <path d="M12.5 3 L20.5 3.7 L20.5 15 L16.5 14.5 Z" fill="#9fb2f2" opacity="0.85"/>
      <path d="M1.5 21.5 C1.2 15, 11.8 15, 11.5 21.5 Z" fill="#92c3ea"/>
      <circle cx="6.5" cy="10.5" r="3.1" fill="#a8703e"/>
      <path d="M3.4 10 C3.4 6.2, 9.6 6.2, 9.6 10 C8.6 8.6, 4.4 8.6, 3.4 10 Z" fill="#3b3b3b"/></svg>
<div class="a" style="left:220px;top:164.5px;width:238px;height:1px;background:#a8a8a8;"></div>
<div class="a" style="left:220px;top:165.5px;width:238px;height:1px;background:#ffffff;"></div>
<div class="a" style="left:290px;top:176.5px;width:168px;height:14px;background:#ffffff;border:1px solid #e4e4e4;border-bottom:none"></div>
<div class="a" style="left:290px;top:189px;width:168px;height:1.6px;background:#1f63c4;"></div>
<div class="a" style="left:374.5px;top:178px;width:0.9px;height:10px;background:#111;"></div>
<div class="a" style="left:290px;top:195.5px;width:168px;height:23px;background:#ffffff;border:1px solid #e4e4e4;border-bottom:1.5px solid #a8a8a8"></div>
<div class="a" style="left:211px;top:250px;width:136px;height:19px;background:#ffffff;border:5px solid #a3262a"></div>
<div class="a" style="left:220.5px;top:226.5px;width:9px;height:9px;background:#fdfdfd;border:1px solid #cfcfcf;border-radius:2px"></div>
<div class="a" style="left:220.5px;top:240.5px;width:9px;height:9px;background:#fdfdfd;border:1px solid #555555;border-radius:2px"></div>
<div class="a" style="left:220.5px;top:255.0px;width:9px;height:9px;background:#1f5fc8;border-radius:2px"></div>
<svg class="a" style="left:220.5px;top:255.0px;" width="9" height="9" viewBox="0 0 9 9"><path d="M2 4.7 L3.8 6.4 L7.1 2.9" stroke="#fff" stroke-width="1" fill="none"/></svg>
<div class="a" style="left:220.5px;top:269.0px;width:9px;height:9px;background:#fdfdfd;border:1px solid #555555;border-radius:2px"></div>
<div class="a" style="left:220.5px;top:283.0px;width:9px;height:9px;background:#fdfdfd;border:1px solid #cfcfcf;border-radius:2px"></div>
<div class="a" style="left:263.5px;top:403px;width:49.19999999999999px;height:15px;background:#fdfdfd;border:1.5px solid #3f88d6;border-radius:3px"></div>
<div class="a" style="left:318px;top:403px;width:48px;height:15px;background:#fdfdfd;border:1px solid #d0d0d0;border-radius:3px"></div>
<div class="a" style="left:372px;top:403px;width:48px;height:15px;background:#fdfdfd;border:1px solid #d0d0d0;border-radius:3px"></div>
<div class="a" style="left:426px;top:403px;width:48px;height:15px;background:#fdfdfd;border:1px solid #d0d0d0;border-radius:3px"></div>
<svg class="a" style="left:0;top:0" width="1280" height="720" font-family="Liberation Sans, sans-serif"><text x="212.2" y="89.4" font-size="8" fill="#1b1b1b" textLength="86.5" lengthAdjust="spacingAndGlyphs" stroke="#1b1b1b" stroke-width="0.18">Administrator Properties</text><text x="226.3" y="111.7" font-size="8" fill="#1b1b1b" textLength="47.7" lengthAdjust="spacingAndGlyphs" stroke="#1b1b1b" stroke-width="0.18">Remote control</text><text x="304.3" y="111.7" font-size="8" fill="#1b1b1b" textLength="104" lengthAdjust="spacingAndGlyphs" stroke="#1b1b1b" stroke-width="0.18">Remote Desktop Services Profile</text><text x="438.6" y="111.7" font-size="8" fill="#1b1b1b" textLength="19.5" lengthAdjust="spacingAndGlyphs" stroke="#1b1b1b" stroke-width="0.18">Dial-in</text><text x="222.5" y="122.2" font-size="8" fill="#1b1b1b" textLength="25" lengthAdjust="spacingAndGlyphs" stroke="#1b1b1b" stroke-width="0.18">General</text><text x="271" y="123.9" font-size="8" fill="#1b1b1b" textLength="34.5" lengthAdjust="spacingAndGlyphs" stroke="#1b1b1b" stroke-width="0.18">Member Of</text><text x="329.2" y="123.9" font-size="8" fill="#1b1b1b" textLength="18.8" lengthAdjust="spacingAndGlyphs" stroke="#1b1b1b" stroke-width="0.18">Profile</text><text x="372.5" y="123.9" font-size="8" fill="#1b1b1b" textLength="38.75" lengthAdjust="spacingAndGlyphs" stroke="#1b1b1b" stroke-width="0.18">Environment</text><text x="434.7" y="123.9" font-size="8" fill="#1b1b1b" textLength="27.8" lengthAdjust="spacingAndGlyphs" stroke="#1b1b1b" stroke-width="0.18">Sessions</text><text x="253" y="148.8" font-size="8" fill="#1b1b1b" textLength="39.8" lengthAdjust="spacingAndGlyphs" stroke="#1b1b1b" stroke-width="0.18">Administrator</text><text x="220.4" y="185.9" font-size="8" fill="#1b1b1b" textLength="31.6" lengthAdjust="spacingAndGlyphs" stroke="#1b1b1b" stroke-width="0.18">Full name:</text><text x="291.9" y="185.9" font-size="8" fill="#1b1b1b" textLength="82.5" lengthAdjust="spacingAndGlyphs" stroke="#1b1b1b" stroke-width="0.18">ChartVPS Example Fellow</text><text x="220.4" y="205" font-size="8" fill="#1b1b1b" textLength="37.2" lengthAdjust="spacingAndGlyphs" stroke="#1b1b1b" stroke-width="0.18">Description:</text><text x="292.3" y="204.8" font-size="7.8" fill="#1b1b1b" textLength="112.7" lengthAdjust="spacingAndGlyphs" stroke="#1b1b1b" stroke-width="0.18">Built-in account for administering the</text><text x="292.3" y="213.2" font-size="7.8" fill="#1b1b1b" textLength="52" lengthAdjust="spacingAndGlyphs" stroke="#1b1b1b" stroke-width="0.18">computer/domain</text><text x="231" y="233.9" font-size="8" fill="#8e8e8e" textLength="131.75" lengthAdjust="spacingAndGlyphs" stroke="#8e8e8e" stroke-width="0.18">User must change password at next logon</text><text x="231" y="247.6" font-size="8" fill="#1b1b1b" textLength="96.4" lengthAdjust="spacingAndGlyphs" stroke="#1b1b1b" stroke-width="0.18">User cannot change password</text><text x="231" y="262.25" font-size="8" fill="#1b1b1b" textLength="74.25" lengthAdjust="spacingAndGlyphs" stroke="#1b1b1b" stroke-width="0.18">Password never expires</text><text x="231" y="276.4" font-size="8" fill="#1b1b1b" textLength="60.75" lengthAdjust="spacingAndGlyphs" stroke="#1b1b1b" stroke-width="0.18">Account is disabled</text><text x="231" y="290.5" font-size="8" fill="#8e8e8e" textLength="68.25" lengthAdjust="spacingAndGlyphs" stroke="#8e8e8e" stroke-width="0.18">Account is locked out</text><text x="282.6" y="413.4" font-size="8" fill="#1b1b1b" textLength="10.4" lengthAdjust="spacingAndGlyphs" stroke="#1b1b1b" stroke-width="0.18">OK</text><text x="330.3" y="413.4" font-size="8" fill="#1b1b1b" textLength="22.2" lengthAdjust="spacingAndGlyphs" stroke="#1b1b1b" stroke-width="0.18">Cancel</text><text x="386.6" y="413.4" font-size="8" fill="#1b1b1b" textLength="17.4" lengthAdjust="spacingAndGlyphs" stroke="#1b1b1b" stroke-width="0.18">Apply</text><text x="442.6" y="413.4" font-size="8" fill="#1b1b1b" textLength="14" lengthAdjust="spacingAndGlyphs" stroke="#1b1b1b" stroke-width="0.18">Help</text></svg>
<!-- task -->
<div class="a" style="left:0px;top:691px;width:1280px;height:29px;background:#eeeeee;"></div>
<div class="a" style="left:0px;top:690.5px;width:1280px;height:1px;background:#dcdcdc;"></div>
<svg class="a" style="left:485px;top:699.5px;" width="17" height="16" viewBox="0 0 17 16"><defs><linearGradient id="wg" x1="0" y1="0" x2="1" y2="1"><stop offset="0" stop-color="#3fc3f5"/><stop offset="1" stop-color="#0a6fd0"/></linearGradient></defs>
      <rect x="0.3" y="0.3" width="7.4" height="7.4" fill="url(#wg)"/><rect x="8.5" y="0.3" width="7.4" height="7.4" fill="url(#wg)"/>
      <rect x="0.3" y="8.2" width="7.4" height="7.4" fill="url(#wg)"/><rect x="8.5" y="8.2" width="7.4" height="7.4" fill="url(#wg)"/></svg>
<div class="a" style="left:509.7px;top:696.7px;width:146px;height:20.6px;background:#fbfbfb;border:1px solid #e2e2e2;border-radius:11px"></div>
<svg class="a" style="left:515px;top:700px;" width="14" height="14" viewBox="0 0 14 14"><circle cx="6.5" cy="6.2" r="4" stroke="#1e1e1e" stroke-width="1.4" fill="none"/><path d="M9.3 9.1 L12 11.8" stroke="#1e1e1e" stroke-width="1.6"/></svg>
<svg class="a" style="left:662px;top:698px;" width="20" height="18" viewBox="0 0 20 18"><rect x="6" y="1" width="12" height="11" fill="#e8e8e8" stroke="#cfcfcf" stroke-width="0.7"/><rect x="1.5" y="5" width="13" height="11.5" fill="#1e1e1e"/><rect x="4" y="5" width="10.5" height="9" fill="#cfcfcf"/><rect x="4" y="5" width="10.5" height="9" fill="#fafafa" opacity="0.5"/></svg>
<svg class="a" style="left:692px;top:698px;" width="19" height="18" viewBox="0 0 19 18"><path d="M1 2 L7 2 L9 4 L18 4 L18 16 L1 16 Z" fill="#f3b72b"/><rect x="1" y="6" width="17" height="10" fill="#ffd451"/><rect x="5" y="11" width="9" height="3.5" fill="#1a8fe0"/></svg>
<svg class="a" style="left:722px;top:698px;" width="18" height="18" viewBox="0 0 18 18"><rect x="0.5" y="0.5" width="17" height="17" fill="#b01e24"/><path d="M1 9 C4 1, 7 1, 9 9 C11 17, 14 17, 17 9" stroke="#fff" stroke-width="1.6" fill="none"/><path d="M1 9 L17 9" stroke="#fff" stroke-width="0.8"/></svg>
<svg class="a" style="left:751px;top:697px;" width="19" height="19" viewBox="0 0 19 19"><rect x="1" y="1" width="6" height="14" fill="#2e8fe0"/><rect x="2" y="3" width="4" height="1" fill="#9fd0f5"/><rect x="5" y="9" width="13" height="8" rx="1" fill="#6f8090"/><rect x="6" y="10" width="11" height="5" fill="#a9c6de"/><rect x="8" y="7" width="7" height="2" fill="#6f8090"/></svg>
<div class="a" style="left:777.5px;top:697px;width:25px;height:21px;background:#f8f8f8;border-radius:3px"></div>
<svg class="a" style="left:781px;top:699px;" width="18" height="17" viewBox="0 0 18 17"><rect x="6" y="0.8" width="11" height="9" fill="#e0e6ec" stroke="#8d98a4" stroke-width="0.7"/><rect x="7.3" y="2" width="8.5" height="6.5" fill="#2a5ad6"/><rect x="1" y="9" width="12" height="6.5" fill="#8c96a0"/><rect x="2" y="10" width="10" height="2" fill="#c8d0d8"/><circle cx="3.5" cy="6.5" r="2.2" fill="#2fae4a"/></svg>
<svg class="a" style="left:1144px;top:703px;" width="10" height="7" viewBox="0 0 10 7"><path d="M1.5 6 L5 2.2 L8.5 6" stroke="#222" stroke-width="1.3" fill="none"/></svg>
<svg class="a" style="left:1193px;top:701px;" width="14" height="13" viewBox="0 0 14 13"><rect x="1" y="1.2" width="9" height="8" rx="0.6" fill="none" stroke="#2a2a2a" stroke-width="1"/><path d="M3 11.5 L9 11.5 M5 9.2 L5 11.5 M7 9.2 L7 11.5" stroke="#2a2a2a" stroke-width="1"/><rect x="9" y="0.8" width="3.6" height="5" rx="1.8" fill="#eee" stroke="#2a2a2a" stroke-width="0.9"/><path d="M10.8 5.8 L10.8 10" stroke="#2a2a2a" stroke-width="0.9"/></svg>
<svg class="a" style="left:1209px;top:701px;" width="14" height="12" viewBox="0 0 14 12"><path d="M1.5 4 L3.8 4 L6.5 1.5 L6.5 10.5 L3.8 8 L1.5 8 Z" fill="none" stroke="#2a2a2a" stroke-width="0.9"/><path d="M8.2 4 C9 5, 9 7, 8.2 8 M9.8 2.8 C11.2 4.5, 11.2 7.5, 9.8 9.2 M11.4 1.6 C13.3 4, 13.3 8, 11.4 10.4" stroke="#2a2a2a" stroke-width="0.9" fill="none"/></svg>
<svg class="a" style="left:0;top:0" width="1280" height="720" font-family="Liberation Sans, sans-serif"><text x="534" y="710.75" font-size="9.5" fill="#5c5c5c" textLength="27.25" lengthAdjust="spacingAndGlyphs">Search</text><text x="1166.8" y="705.3" font-size="7.6" fill="#1e1e1e" textLength="15.3" lengthAdjust="spacingAndGlyphs">ENG</text><text x="1169.8" y="715.9" font-size="7.6" fill="#1e1e1e" textLength="9.4" lengthAdjust="spacingAndGlyphs">US</text><text x="1236" y="704.9" font-size="7.6" fill="#1e1e1e" textLength="33.1" lengthAdjust="spacingAndGlyphs">12:01 PM</text><text x="1232.1" y="715.5" font-size="7.6" fill="#1e1e1e" textLength="37" lengthAdjust="spacingAndGlyphs">8/25/2025</text></svg>
</body></html>
